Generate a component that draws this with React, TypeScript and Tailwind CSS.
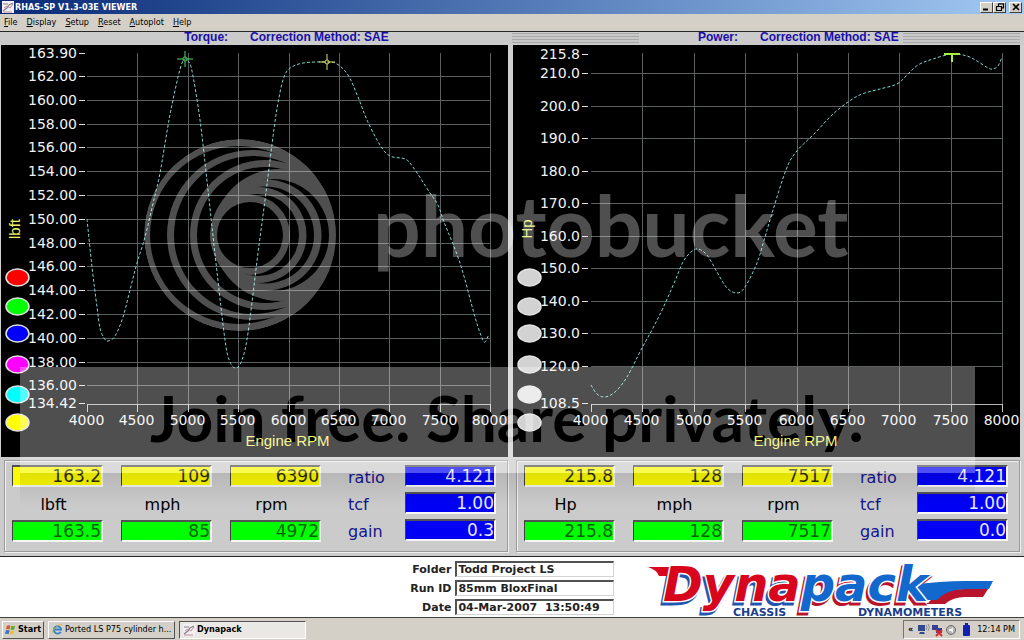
import { Fragment } from "react";
import type { ReactNode } from "react";
import { clsx } from "clsx";

type Point = [number, number];

interface Chart {
  id: string;
  unit: string;
  plotLeft: number;
  plotRight: number;
  yTicks: { label: string; y: number; grid: boolean }[];
  curve: Point[];
  lamps: string[];
  markers: { x: number; y: number; color: string; half?: boolean }[];
}

interface Readout {
  id: string;
  columns: { unit: string; cursor: string; peak: string }[];
  settings: { name: string; value: string }[];
}

const MENU = ["File", "Display", "Setup", "Reset", "Autoplot", "Help"];
const RPM = [4000, 4500, 5000, 5500, 6000, 6500, 7000, 7500, 8000];
const LAMP_Y = [232, 261, 288, 319, 349, 377];
const AXIS_Y = 359;

const torque: Chart = {
  id: "torque",
  unit: "lbft",
  plotLeft: 87,
  plotRight: 490,
  yTicks: [
    { label: "163.90", y: 8, grid: false },
    ...[162, 160, 158, 156, 154, 152, 150, 148, 146, 144, 142, 140, 138, 136].map((v) => ({
      label: v.toFixed(2),
      y: Math.round(31 + (162 - v) * 11.9),
      grid: true,
    })),
    { label: "134.42", y: 358, grid: false },
  ],
  curve: [
    [87, 174], [92, 222], [97, 262], [100, 283], [104, 293], [108, 296], [115, 291], [123, 272],
    [130, 245], [137, 218], [145, 192], [155, 150], [160, 128], [169, 75], [173, 55], [178, 32],
    [182, 18], [185, 14], [188, 16], [192, 26], [200, 75], [208, 145], [216, 218], [225, 295],
    [230, 317], [236, 323], [242, 315], [248, 288], [258, 208], [265, 155], [274, 84], [278, 58],
    [283, 35], [289, 24], [303, 18], [327, 17], [337, 19], [348, 30], [358, 52], [367, 75],
    [380, 100], [390, 111], [405, 114], [413, 122], [430, 148], [438, 160], [444, 177], [460, 218],
    [475, 272], [482, 293], [485, 297], [489, 289],
  ],
  lamps: ["#ff0000", "#00ff00", "#0000ff", "#ff00ff", "#00ffff", "#ffff00"],
  markers: [
    { x: 185, y: 14, color: "#4fdc5c" },
    { x: 327, y: 17, color: "#dede58" },
  ],
};

const power: Chart = {
  id: "power",
  unit: "Hp",
  plotLeft: 79,
  plotRight: 490,
  yTicks: [
    { label: "215.8", y: 9, grid: false },
    ...[210, 200, 190, 180, 170, 160, 150, 140, 130, 120].map((v) => ({
      label: v.toFixed(1),
      y: Math.round(28 + (210 - v) * 3.255),
      grid: true,
    })),
    { label: "108.5", y: 358, grid: false },
  ],
  curve: [
    [79, 340], [85, 349], [93, 352], [103, 347], [115, 332], [130, 303], [141, 283], [151, 263],
    [163, 236], [171, 217], [179, 207], [186, 204], [195, 210], [205, 227], [215, 243], [225, 248],
    [233, 242], [245, 218], [253, 192], [261, 165], [274, 125], [284, 107], [303, 88], [320, 70],
    [336, 57], [350, 49], [368, 44], [385, 39], [395, 30], [406, 20], [421, 14], [440, 9],
    [455, 11], [465, 16], [476, 23], [481, 24], [486, 21], [490, 12],
  ],
  lamps: ["#d2d2d2", "#d2d2d2", "#d2d2d2", "#d2d2d2", "#e4e4e4", "#d2d2d2"],
  markers: [{ x: 440, y: 9, color: "#a8f040", half: true }],
};

const readouts: Readout[] = [
  {
    id: "left",
    columns: [
      { unit: "lbft", cursor: "163.2", peak: "163.5" },
      { unit: "mph", cursor: "109", peak: "85" },
      { unit: "rpm", cursor: "6390", peak: "4972" },
    ],
    settings: [
      { name: "ratio", value: "4.121" },
      { name: "tcf", value: "1.00" },
      { name: "gain", value: "0.3" },
    ],
  },
  {
    id: "right",
    columns: [
      { unit: "Hp", cursor: "215.8", peak: "215.8" },
      { unit: "mph", cursor: "128", peak: "128" },
      { unit: "rpm", cursor: "7517", peak: "7517" },
    ],
    settings: [
      { name: "ratio", value: "4.121" },
      { name: "tcf", value: "1.00" },
      { name: "gain", value: "0.0" },
    ],
  },
];

const runInfo = [
  { id: "folder", label: "Folder", value: "Todd Project LS" },
  { id: "run-id", label: "Run ID", value: "85mm BloxFinal" },
  { id: "date", label: "Date", value: "04-Mar-2007  13:50:49" },
];

// Catmull-Rom spline through the points, as cubic beziers
function smoothPath(points: Point[]) {
  let d = `M${points[0][0]} ${points[0][1]}`;
  for (let i = 0; i < points.length - 1; i++) {
    const p0 = points[i - 1] ?? points[i];
    const p1 = points[i];
    const p2 = points[i + 1];
    const p3 = points[i + 2] ?? p2;
    d += `C${p1[0] + (p2[0] - p0[0]) / 6} ${p1[1] + (p2[1] - p0[1]) / 6} ${p2[0] - (p3[0] - p1[0]) / 6} ${p2[1] - (p3[1] - p1[1]) / 6} ${p2[0]} ${p2[1]}`;
  }
  return d;
}

function PlotIcon({ className }: { className?: string }) {
  return (
    <svg viewBox="0 0 12 12" className={className} aria-hidden="true">
      <rect width="12" height="12" fill="#f4eff2" />
      <path d="M1 3h5M1 10l4-3 2-3 4-2" stroke="#8a7f88" strokeWidth="1.2" fill="none" />
      <path d="M2 7l3-2 3 2 3-4M1 11h9" stroke="#b98fa4" fill="none" />
    </svg>
  );
}

function WindowButton({ label, children }: { label: string; children: ReactNode }) {
  return (
    <button
      type="button"
      aria-label={label}
      className="grid h-[11px] w-[13px] place-items-center border border-t-white border-r-neutral-700 border-b-neutral-700 border-l-white bg-[#d4d0c8]"
    >
      <svg viewBox="0 0 10 8" className="h-2 w-2.5" fill="none" stroke="#000">
        {children}
      </svg>
    </button>
  );
}

function TitleBar() {
  return (
    <header className="flex h-[14px] items-center gap-px bg-linear-to-r from-[#0a2a78] to-[#a3c9f3] px-0.5">
      <PlotIcon className="size-3" />
      <h1 className="flex-1 font-['DejaVu_Sans_Condensed','DejaVu_Sans',sans-serif] text-[9px] leading-[14px] font-bold text-white">
        RHAS-SP V1.3-03E VIEWER
      </h1>
      <div className="flex">
        <WindowButton label="Minimize">
          <path d="M1 6.5h5" strokeWidth="2" />
        </WindowButton>
        <WindowButton label="Restore">
          <path d="M3.5 3V.8h5v4H7M1.5 3.5h5v4h-5z" strokeWidth="1.2" />
        </WindowButton>
      </div>
      <div className="ml-0.5 flex">
        <WindowButton label="Close">
          <path d="M2 1l6 6M8 1L2 7" strokeWidth="1.6" />
        </WindowButton>
      </div>
    </header>
  );
}

function MenuBar() {
  return (
    <nav className="flex h-[18px] items-center gap-[9px] border-b border-neutral-800 bg-[#d4d0c8] px-1 font-['DejaVu_Sans_Condensed','DejaVu_Sans',sans-serif] text-[9px] text-black">
      {MENU.map((item) => (
        <button key={item} type="button">
          <span className="underline">{item[0]}</span>
          {item.slice(1)}
        </button>
      ))}
    </nav>
  );
}

const STRIPES =
  "my-px bg-[repeating-linear-gradient(to_bottom,#a8a8a8_0px,#a8a8a8_1px,#c8c8c8_1px,#c8c8c8_3px)]";

function ChartHeadings() {
  return (
    <div className="grid h-[13px] grid-cols-2 bg-[#cbcbcb] font-['Liberation_Sans',Arial,sans-serif] text-[12px] leading-[11px] font-bold text-[#1a0fa8]">
      <div className="flex gap-[22px] pl-[36%] whitespace-nowrap">
        <h2>Torque:</h2>
        <p>Correction Method: SAE</p>
      </div>
      <div className="flex pr-1 whitespace-nowrap">
        <div className={clsx(STRIPES, "w-1/4")} />
        <h2 className="ml-[59px]">Power:</h2>
        <p className="mr-1 ml-[22px]">Correction Method: SAE</p>
        <div className={clsx(STRIPES, "flex-1")} />
      </div>
    </div>
  );
}

function DynoChart({ chart }: { chart: Chart }) {
  const step = (chart.plotRight - chart.plotLeft) / (RPM.length - 1);
  const rpmX = RPM.map((_, i) => Math.round(chart.plotLeft + step * i) + 0.5);
  const labelRight = chart.plotLeft - (chart.id === "torque" ? 10 : 11);

  return (
    <div className="border-r-4 border-l border-[#cfcfcf] bg-black">
      <svg
        viewBox="1 0 507 412"
        className="block h-auto w-full"
        role="img"
        aria-label={`${chart.unit} against engine RPM`}
        fontFamily="'DejaVu Sans', sans-serif"
        fontSize="14"
      >
        <g stroke="#5c5f5f">
          {chart.yTicks
            .filter((tick) => tick.grid)
            .map((tick) => (
              <path key={tick.label} d={`M${chart.plotLeft} ${tick.y + 0.5}H${chart.plotRight}`} />
            ))}
          {rpmX.slice(1).map((x) => (
            <path key={x} d={`M${x} 8V${AXIS_Y}`} />
          ))}
        </g>
        <path d={`M${chart.plotLeft} ${AXIS_Y + 0.5}H${chart.plotRight + 1}`} stroke="#b4b4b4" />
        <path
          d={smoothPath(chart.curve)}
          fill="none"
          stroke="#7fd6d2"
          strokeDasharray="3 2"
          shapeRendering="geometricPrecision"
        />

        {chart.lamps.map((color, i) => (
          <ellipse
            key={LAMP_Y[i]}
            cx="17.5"
            cy={LAMP_Y[i] + 0.5}
            rx="11.5"
            ry="8.5"
            fill={color}
            stroke="#e2e2e2"
            strokeWidth="1.5"
          />
        ))}

        <g fill="#f2f2f2">
          {chart.yTicks.map((tick) => (
            <Fragment key={tick.label}>
              <text x={labelRight} y={tick.y + 5} textAnchor="end">
                {tick.label}
              </text>
              <path d={`M${labelRight + 2} ${tick.y + 0.5}h6`} stroke="#e0e0e0" />
            </Fragment>
          ))}
          {RPM.map((rpm, i) => (
            <Fragment key={rpm}>
              <path d={`M${rpmX[i]} ${AXIS_Y}v8`} stroke="#c4c4c4" />
              <text x={rpmX[i] - 1} y="380" textAnchor="middle">
                {rpm}
              </text>
            </Fragment>
          ))}
        </g>

        <g
          fill="#f2f26a"
          fontFamily="'Liberation Sans', Arial, sans-serif"
          fontSize="15"
          textAnchor="middle"
        >
          <text x={(chart.plotLeft + chart.plotRight) / 2 - 1} y="401">
            Engine RPM
          </text>
          <text transform="translate(20 184) rotate(-90)">{chart.unit}</text>
        </g>

        {chart.markers.map((m) => (
          <g key={m.x} stroke={m.color} fill="none">
            {m.half ? (
              <path d={`M${m.x - 8} ${m.y}h16M${m.x} ${m.y}v8`} strokeWidth="2" />
            ) : (
              <>
                <path d={`M${m.x - 8} ${m.y}h6m4 0h6M${m.x} ${m.y - 8}v6m0 4v6`} />
                <circle cx={m.x} cy={m.y} r="2" />
              </>
            )}
          </g>
        ))}
      </svg>
    </div>
  );
}

function ValueBox({
  id,
  value,
  label,
  className,
}: {
  id: string;
  value: string;
  label?: string;
  className: string;
}) {
  return (
    <input
      id={id}
      readOnly
      value={value}
      aria-label={label}
      className={clsx(
        "h-[22px] w-[91px] border-t-2 border-r-2 border-b-2 border-l border-t-neutral-600 border-r-neutral-100 border-b-neutral-100 border-l-neutral-700 text-right text-[17px] leading-[18px] outline-none",
        className,
      )}
    />
  );
}

function ReadoutPanel({ readout }: { readout: Readout }) {
  return (
    <section className="px-1 pt-[3px] pb-1">
      <div className="flex h-[92px] justify-between border border-[#9a9a9a] pt-1 pr-[11px] pl-[7px] font-['DejaVu_Sans',sans-serif] text-[16px] shadow-[inset_1px_1px_#f0f0f0,1px_1px_#f0f0f0]">
        <div className="flex gap-[18px]">
          {readout.columns.map((col) => {
            const id = `${readout.id}-${col.unit}`;
            return (
              <div key={id} className="flex flex-col gap-[5px]">
                <ValueBox
                  id={`${id}-cursor`}
                  label={`${col.unit} at cursor`}
                  value={col.cursor}
                  className="bg-[#fafa00] text-[#2c2c00]"
                />
                <label
                  htmlFor={`${id}-peak`}
                  className="h-[23px] pr-2 text-center leading-[26px] text-black"
                >
                  {col.unit}
                </label>
                <ValueBox
                  id={`${id}-peak`}
                  value={col.peak}
                  className="bg-[#00ff00] text-[#006400]"
                />
              </div>
            );
          })}
        </div>
        <div className="grid auto-rows-[22px] grid-cols-[57px_91px] gap-y-[5px]">
          {readout.settings.map((s) => (
            <Fragment key={s.name}>
              <label
                htmlFor={`${readout.id}-${s.name}`}
                className="leading-[26px] text-[#14148c]"
              >
                {s.name}
              </label>
              <ValueBox
                id={`${readout.id}-${s.name}`}
                value={s.value}
                className="bg-[#0000f5] text-[#e8e8ff]"
              />
            </Fragment>
          ))}
        </div>
      </div>
    </section>
  );
}

function Watermark() {
  return (
    <svg
      viewBox="0 45 1024 512"
      preserveAspectRatio="xMidYMin meet"
      className="pointer-events-none absolute inset-x-0 top-0 w-full"
      fontFamily="Lato, 'Open Sans', sans-serif"
    >
      <defs>
        <clipPath id="disc">
          <circle cx="240" cy="235" r="96" />
        </clipPath>
        <mask id="rings" maskUnits="userSpaceOnUse" x="140" y="135" width="200" height="200">
          <g clipPath="url(#disc)">
            <circle cx="240" cy="235" r="96" fill="#fff" />
            <circle cx="239" cy="235" r="89" fill="#000" />
            <circle cx="252" cy="235" r="85" fill="#fff" />
            <circle cx="253" cy="235" r="79" fill="#000" />
            <circle cx="265" cy="235" r="75" fill="#fff" />
            <circle cx="265" cy="235" r="68" fill="#000" />
            <circle cx="279" cy="235" r="66" fill="#fff" />
            <circle cx="273" cy="235" r="56" fill="#000" />
            <circle cx="266" cy="235" r="55.5" fill="#fff" />
            <circle cx="265.5" cy="235" r="48.5" fill="#000" />
            <circle cx="258.5" cy="235" r="48" fill="#fff" />
            <circle cx="258" cy="235" r="41" fill="#000" />
            <circle cx="250" cy="235" r="40" fill="#fff" />
            <circle cx="250" cy="235" r="33" fill="#000" />
          </g>
        </mask>
        <mask id="slogan" maskUnits="userSpaceOnUse" x="0" y="360" width="1024" height="120">
          <rect x="20" y="367" width="955" height="106" fill="#fff" />
          <text x="150" y="442" fontSize="64" fontWeight="700" fill="#000">
            Join free. Share privately.
          </text>
        </mask>
        <linearGradient id="shade" x1="0" y1="0" x2="0" y2="1">
          <stop offset="0" stopColor="#000" stopOpacity="0.1" />
          <stop offset="1" stopColor="#000" stopOpacity="0" />
        </linearGradient>
      </defs>
      <g fill="#fff" fillOpacity="0.31">
        <circle cx="240" cy="235" r="96" mask="url(#rings)" />
        <text x="373" y="257" fontSize="84" fontWeight="700">
          photobucket
        </text>
        <rect x="20" y="367" width="955" height="106" mask="url(#slogan)" />
      </g>
      <rect x="20" y="473" width="955" height="34" fill="url(#shade)" />
    </svg>
  );
}

function DynapackLogo() {
  return (
    <svg viewBox="640 554 360 62" className="h-[62px] w-[360px]" role="img" aria-label="Dynapack">
      <g fontFamily="'DejaVu Sans', sans-serif" fontWeight="700">
        <g fontSize="48" fontStyle="italic" strokeWidth="3">
          <path d="M926 601l14-11q10-4 24-4h24l-5 8h-18q-12 0-20 7z" fill="#b8152c" />
          <text x="661" y="601">
            <tspan fill="#1f56b0" stroke="#1f56b0">Dyna</tspan>
            <tspan fill="#b8152c" stroke="#b8152c">pack</tspan>
          </text>
          <path d="M648 564h34l-5 9h-18q-2-6-11-9z" fill="#d8061c" />
          <path d="M912 582q28-4 54-4h27l-4 8h-22q-20 0-30 11h-14z" fill="#1268cc" />
          <text x="663" y="598" paintOrder="stroke" stroke="#fff">
            <tspan fill="#d8061c">Dyna</tspan>
            <tspan fill="#1268cc">pack</tspan>
          </text>
        </g>
        <g fontSize="11" fill="#1b3f8c">
          <text x="733" y="613">CHASSIS</text>
          <text x="858" y="613">DYNAMOMETERS</text>
        </g>
      </g>
    </svg>
  );
}

function RunInfo() {
  return (
    <footer className="flex h-[61px] border-t border-neutral-800 bg-white">
      <div className="flex w-[60%] flex-col items-end justify-end gap-[3px] pb-0.5 font-['DejaVu_Sans',sans-serif] text-[11px] leading-[14px] font-bold text-[#222]">
        {runInfo.map((field) => (
          <div key={field.id} className="flex items-end gap-1">
            <label htmlFor={field.id}>{field.label}</label>
            <input
              id={field.id}
              readOnly
              value={field.value}
              className="h-4 w-[159px] border-t-2 border-r border-b border-l-2 border-t-neutral-600 border-r-neutral-300 border-b-neutral-300 border-l-neutral-600 bg-white pl-px whitespace-pre outline-none"
            />
          </div>
        ))}
      </div>
      <div className="ml-[26px]">
        <DynapackLogo />
      </div>
    </footer>
  );
}

function TrayIcons() {
  return (
    <svg viewBox="0 0 56 14" className="h-[14px] w-14" aria-hidden="true">
      <path d="M1 2h7v6H1zM3 9h4l1 2H2z" fill="#34488c" />
      <path d="M9 2q2 2 0 5M11 1q3 3 0 7" stroke="#8a8a8a" fill="none" />
      <path d="M15 2h6v5h-6zM19 5h6v5h-6z" fill="#3a3f96" />
      <path d="M19 7l6 6M25 7l-6 6" stroke="#d42a2a" strokeWidth="2" />
      <circle cx="34" cy="7" r="4.5" fill="#b4b4b4" stroke="#6e6e6e" />
      <path d="M32 6h2l2-2v6l-2-2h-2z" fill="#f4f4f4" />
      <rect x="46" y="2" width="7" height="11" rx="1" fill="#1420b4" />
      <path d="M48 1h3" stroke="#1420b4" strokeWidth="2" />
    </svg>
  );
}

function TaskBar() {
  const raised =
    "border border-t-white border-r-neutral-600 border-b-neutral-600 border-l-white";
  return (
    <div className="flex h-[23px] items-center gap-1 border-t border-neutral-700 bg-[#d4d0c8] px-0.5 pt-px font-['DejaVu_Sans_Condensed','DejaVu_Sans',sans-serif] text-[9px] text-black">
      <button
        type="button"
        className={clsx("flex h-[18px] w-[42px] items-center gap-0.5 pl-0.5 font-bold", raised)}
      >
        <svg viewBox="0 0 12 12" className="size-[11px] shrink-0" aria-hidden="true">
          <path d="M2 2q2-1.500 4 0L5 6Q3 5 1 6z" fill="#dd5a2a" />
          <path d="M7 2q2 1 4 0l-1 4q-2 1-4 0z" fill="#62a838" />
          <path d="M1 7q2-1 4 0l-1 4q-2-1-4 0z" fill="#3a6ed0" />
          <path d="M6 7q2 1 4 0l-1 4q-2 1-4 0z" fill="#ecc02c" />
        </svg>
        Start
      </button>
      <button
        type="button"
        className={clsx("flex h-[18px] w-[127px] items-center gap-0.5 pl-[3px]", raised)}
      >
        <svg viewBox="0 0 12 12" className="size-[11px] shrink-0" fill="none" aria-hidden="true">
          <path d="M9.500 8.500A4 4 0 1 1 10 6H3" stroke="#2b84cc" strokeWidth="2" />
          <path d="M1 10Q-1 8 5 3t6-1" stroke="#e0b040" />
        </svg>
        <span className="truncate">Ported LS P75 cylinder h...</span>
      </button>
      <button
        type="button"
        className="flex h-[18px] w-[127px] items-center gap-0.5 border border-t-neutral-600 border-r-white border-b-white border-l-neutral-600 bg-[#eae8e4] pl-[3px] font-bold"
      >
        <PlotIcon className="size-3" />
        Dynapack
      </button>
      <div className="mr-0.5 ml-auto flex h-[19px] items-center gap-1 border border-t-neutral-500 border-r-white border-b-white border-l-neutral-500 px-1">
        <span className="font-bold">«</span>
        <TrayIcons />
        <time>12:14 PM</time>
      </div>
    </div>
  );
}

export default function App() {
  return (
    <div className="min-h-screen bg-[#d4d0c8]">
      <TitleBar />
      <MenuBar />
      <ChartHeadings />
      <main className="relative">
        <div className="grid grid-cols-2">
          <DynoChart chart={torque} />
          <DynoChart chart={power} />
        </div>
        <div className="grid grid-cols-2 bg-[#cbcbcb]">
          {readouts.map((readout) => (
            <ReadoutPanel key={readout.id} readout={readout} />
          ))}
        </div>
        <Watermark />
      </main>
      <RunInfo />
      <TaskBar />
    </div>
  );
}
